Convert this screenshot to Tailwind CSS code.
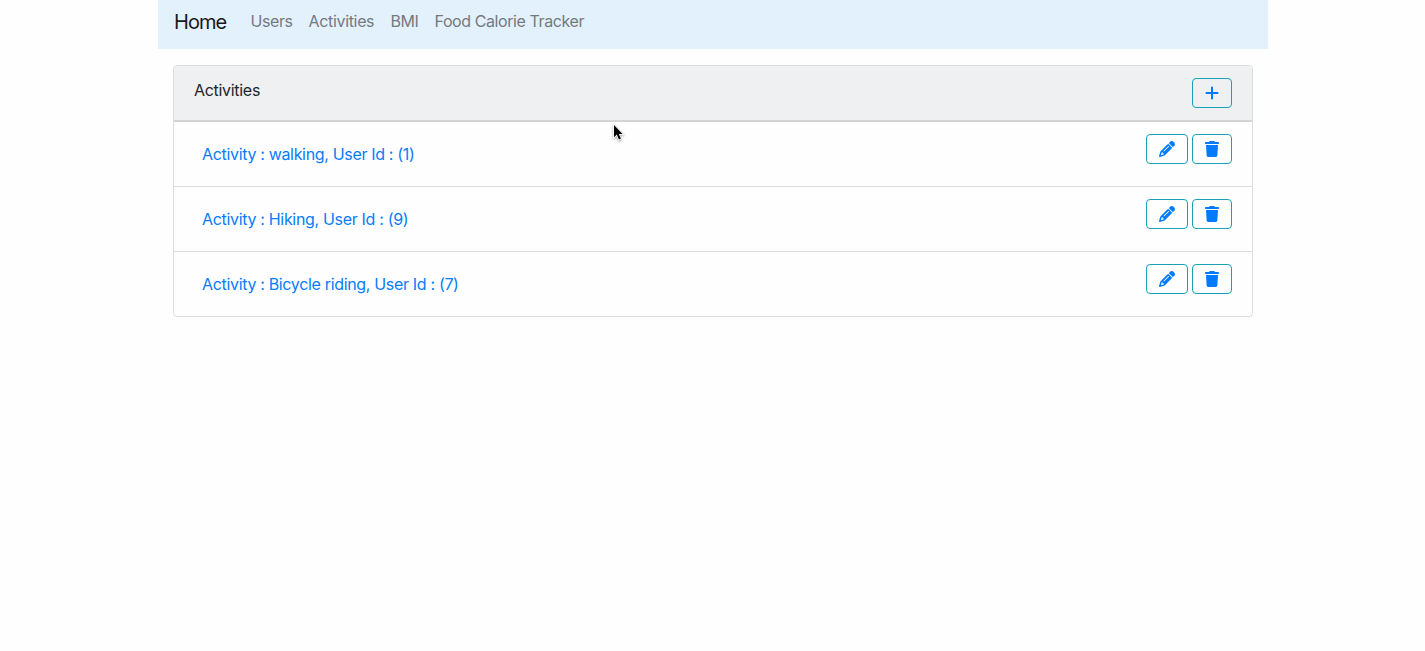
<!DOCTYPE html>
<html lang="en">
<head>
<meta charset="utf-8">
<title>Activities</title>
<script src="https://cdn.jsdelivr.net/npm/@tailwindcss/browser@4"></script>
</head>
<body class="h-[651px] overflow-hidden bg-[#fefefe] font-[Inter,sans-serif] text-base text-[#212529]">
<svg class="hidden">
  <symbol id="pencil" viewBox="0 0 512 512"><path d="M410.3 231l11.3-11.3-33.9-33.9-62.1-62.1L291.7 89.8l-11.3 11.3-22.6 22.6L58.6 322.9c-10.4 10.4-18 23.3-22.2 37.4L1 480.7c-2.5 8.4-.2 17.5 6.1 23.7s15.3 8.5 23.7 6.1l120.3-35.4c14.1-4.2 27-11.8 37.4-22.2L387.7 253.7 410.3 231zM160 399.4l-9.1 22.7c-4 3.1-8.5 5.4-13.3 6.9L59.4 452l23-78.1c1.4-4.9 3.8-9.4 6.9-13.3l22.7-9.1v32c0 8.8 7.2 16 16 16h32zM362.7 18.7L348.3 33.2 325.7 55.8 314.3 67.1l33.9 33.9 62.1 62.1 33.9 33.9 11.3-11.3 22.6-22.6 14.5-14.5c25-25 25-65.5 0-90.5L453.3 18.7c-25-25-65.5-25-90.5 0zm-47.4 168l-144 144c-6.2 6.2-16.4 6.2-22.6 0s-6.2-16.4 0-22.6l144-144c6.2-6.2 16.4-6.2 22.6 0s6.2 16.4 0 22.6z"/></symbol>
  <symbol id="trash" viewBox="0 0 448 512"><path d="M135.2 17.7L128 32H32C14.3 32 0 46.3 0 64S14.3 96 32 96H416c17.7 0 32-14.3 32-32s-14.3-32-32-32H320l-7.2-14.3C307.4 6.8 296.3 0 284.2 0H163.8c-12.1 0-23.2 6.8-28.6 17.7zM416 128H32L53.2 467c1.6 25.3 22.6 45 47.9 45H346.9c25.3 0 46.3-19.7 47.9-45L416 128z"/></symbol>
  <symbol id="plus" viewBox="0 0 448 512"><path d="M256 80c0-17.7-14.3-32-32-32s-32 14.3-32 32V224H48c-17.7 0-32 14.3-32 32s14.3 32 32 32H192V432c0 17.7 14.3 32 32 32s32-14.3 32-32V288H400c17.7 0 32-14.3 32-32s-14.3-32-32-32H256V80z"/></symbol>
</svg>
<div class="ml-[158px] w-[1110px]">
  <nav class="flex h-[49px] items-start bg-[#e3f1fc] pl-4 text-[#75797d]">
    <a class="mt-[7px] mr-6 w-[52.5px] whitespace-nowrap text-xl leading-[30px] tracking-[-0.95px] text-[#17191b]">Home</a>
    <a class="mt-[9px] mr-4 w-[42px] whitespace-nowrap tracking-[-0.4px]">Users</a>
    <a class="mt-[9px] mr-4 w-[66px] whitespace-nowrap tracking-[-0.33px]">Activities</a>
    <a class="mt-[9px] mr-4 w-7 whitespace-nowrap tracking-[-0.5px]">BMI</a>
    <a class="mt-[9px] whitespace-nowrap tracking-[-0.41px]">Food Calorie Tracker</a>
  </nav>
  <main class="mx-[15px] mt-4 rounded border border-[#dcddde]">
    <header class="flex h-14 items-start justify-between rounded-t-[3px] border-b-2 border-[#d2d4d5] bg-[#eff0f2] px-5 pt-3">
      <h1 class="tracking-[-0.3px]">Activities</h1>
      <button class="flex h-[30px] w-10 items-center justify-center rounded border border-[#17a2b8] text-[#007bff]"><svg class="h-4 w-3.5 fill-current"><use href="#plus"/></svg></button>
    </header>
    <ul class="divide-y divide-[#dcddde] text-[#087cfa]">
      <li class="flex h-[65px] items-start justify-between pr-5 pl-7 pt-3">
        <a class="mt-2 whitespace-nowrap tracking-[-0.33px]">Activity : walking, User Id : (1)</a>
        <div class="flex gap-1 text-[#007bff]">
          <button class="flex h-[30px] w-[42px] items-center justify-center rounded border border-[#17a2b8]"><svg class="size-4 fill-current"><use href="#pencil"/></svg></button>
          <button class="flex h-[30px] w-10 items-center justify-center rounded border border-[#17a2b8]"><svg class="h-4 w-3.5 fill-current"><use href="#trash"/></svg></button>
        </div>
      </li>
      <li class="flex h-[65px] items-start justify-between pr-5 pl-7 pt-3">
        <a class="mt-2 whitespace-nowrap tracking-[-0.32px]">Activity : Hiking, User Id : (9)</a>
        <div class="flex gap-1 text-[#007bff]">
          <button class="flex h-[30px] w-[42px] items-center justify-center rounded border border-[#17a2b8]"><svg class="size-4 fill-current"><use href="#pencil"/></svg></button>
          <button class="flex h-[30px] w-10 items-center justify-center rounded border border-[#17a2b8]"><svg class="h-4 w-3.5 fill-current"><use href="#trash"/></svg></button>
        </div>
      </li>
      <li class="flex h-16 items-start justify-between pr-5 pl-7 pt-3">
        <a class="mt-2 whitespace-nowrap tracking-[-0.33px]">Activity : Bicycle riding, User Id : (7)</a>
        <div class="flex gap-1 text-[#007bff]">
          <button class="flex h-[30px] w-[42px] items-center justify-center rounded border border-[#17a2b8]"><svg class="size-4 fill-current"><use href="#pencil"/></svg></button>
          <button class="flex h-[30px] w-10 items-center justify-center rounded border border-[#17a2b8]"><svg class="h-4 w-3.5 fill-current"><use href="#trash"/></svg></button>
        </div>
      </li>
    </ul>
  </main>
</div>
<svg class="absolute top-[123px] left-[611px] h-[21px] w-[15px] drop-shadow-[0_1px_1px_rgba(0,0,0,0.4)]" viewBox="0 0 15 21"><path d="M3 2v12.2l2.8-2.6 2.1 4.9 2-.9-2.1-4.7h3.8z" fill="#000" stroke="#fff" stroke-width="1.6" paint-order="stroke"/></svg>
</body>
</html>
